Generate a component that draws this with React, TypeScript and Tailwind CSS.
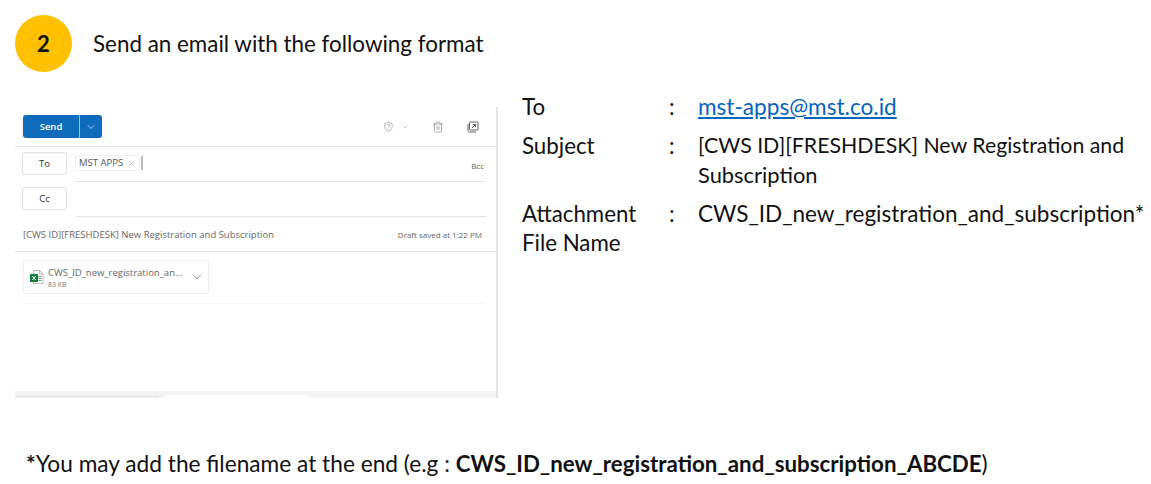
import { ChevronDown, ShieldQuestion, Trash2, X } from 'lucide-react';

const details = [
  { label: ['To'], value: [{ text: 'mst-apps@mst.co.id', size: 'text-[22.6px]' }], link: true },
  {
    label: ['Subject'],
    value: [
      { text: '[CWS ID][FRESHDESK] New Registration and', size: 'text-[21.3px]' },
      { text: 'Subscription', size: 'text-[21.9px]' },
    ],
  },
  {
    label: ['Attachment', 'File Name'],
    value: [{ text: 'CWS_ID_new_registration_and_subscription*', size: 'text-[22.5px]' }],
  },
];

function PopoutIcon() {
  return (
    <svg width="12" height="12" viewBox="0 0 12 12" fill="none" stroke="#616161" strokeWidth="1">
      <rect x="2.5" y="1" width="8.5" height="8" rx="1" />
      <path d="M1 3v6.5A1.5 1.5 0 0 0 2.500 11H9" />
      <path d="M5 7l3.500-3.500M6 3.500h2.500V6" />
    </svg>
  );
}

function ExcelIcon() {
  return (
    <svg width="14" height="14" viewBox="0 0 14 14">
      <path d="M3.500 .5h6l3.500 3.500v9.500h-9.500z" fill="#fff" stroke="#a8a8a8" strokeWidth=".8" />
      <path d="M9.500 .5v3.500h3.500" fill="none" stroke="#a8a8a8" strokeWidth=".8" />
      <path d="M8.500 6.500h3M8.500 8.500h3M8.500 10.500h3" stroke="#5ba67a" strokeWidth="1" />
      <rect x="0" y="4" width="8" height="8" rx=".6" fill="#107c41" />
      <path d="M2.300 6l3.400 4M5.700 6l-3.400 4" stroke="#fff" strokeWidth="1" />
    </svg>
  );
}

function FieldButton({ label }: { label: string }) {
  return (
    <div className="w-[45px] h-[23px] shrink-0 flex items-center justify-center pt-[1px] rounded-[3px] border border-[#e0e0e0] text-[9.500px] text-[#333]">
      {label}
    </div>
  );
}

function EmailDraft() {
  return (
    <div className="w-[483px] h-[291px] shrink-0 flex flex-col border-r-2 border-[#e4e4e4] font-['Open_Sans',sans-serif]">
      <div className="h-[40px] shrink-0 flex items-start justify-between pt-[8px] pl-[8px] pr-[17px] border-b border-[#e6e6e6]">
        <div className="flex h-[23px] w-[79px] rounded-[3px] bg-[#0f6cbd] text-white">
          <div className="w-[57px] flex items-center justify-center pt-[1px] text-[9.500px] font-semibold border-r border-[#9cc3e6]">Send</div>
          <div className="flex-1 flex items-center justify-center">
            <ChevronDown size={12} strokeWidth={1.2} />
          </div>
        </div>
        <div className="flex items-center h-[23px] text-[#757575]">
          <ShieldQuestion size={11} strokeWidth={1.2} />
          <ChevronDown size={8} strokeWidth={1.2} className="ml-[7px]" />
          <Trash2 size={12} strokeWidth={1.2} className="ml-[23px]" />
          <div className="ml-[23px]">
            <PopoutIcon />
          </div>
        </div>
      </div>
      <div className="h-[35px] shrink-0 flex items-start pt-[5px] pl-[7px] pr-[10px]">
        <FieldButton label="To" />
        <div className="ml-[8px] flex-1 h-[35px] -mt-[5px] pt-[8px] flex items-start justify-between border-b border-[#e4e4e4]">
          <div className="flex items-center h-[16px]">
            <div className="flex items-center h-[16px] px-[3px] rounded-[2px] border border-[#f0f0f0] text-[9.500px] text-[#555]">
              MST APPS
              <X size={9} strokeWidth={1.2} className="ml-[4px] text-[#777]" />
            </div>
            <div className="w-[2px] h-[14px] ml-[1px] bg-[#bdbdbd]" />
          </div>
          <span className="text-[8px] text-[#666] mt-[5px] mr-[2px]">Bcc</span>
        </div>
      </div>
      <div className="h-[35px] shrink-0 flex items-start pt-[5px] pl-[7px] pr-[10px]">
        <FieldButton label="Cc" />
        <div className="ml-[8px] flex-1 h-[35px] -mt-[5px] border-b border-[#e4e4e4]" />
      </div>
      <div className="h-[35px] shrink-0 flex items-center justify-between pl-[8px] pr-[14px] pt-[2px] border-b border-[#e6e6e6] text-[#666]">
        <span className="text-[9.500px]">[CWS ID][FRESHDESK] New Registration and Subscription</span>
        <span className="text-[8px]">Draft saved at 1:22 PM</span>
      </div>
      <div className="flex-1 px-[8px] pt-[8px]">
        <div className="pb-[9px] mr-[2px] border-b border-[#f5f5f5]">
          <div className="w-[186px] h-[34px] flex items-center pl-[6px] rounded-[2px] border border-[#eeeeee]">
            <ExcelIcon />
            <div className="ml-[4px] w-[137px] flex flex-col">
              <span className="text-[9.500px] leading-[13px] text-[#666] whitespace-nowrap">CWS_ID_new_registration_an...</span>
              <span className="text-[7px] leading-[9px] text-[#777] mt-[1px]">83 KB</span>
            </div>
            <ChevronDown size={14} strokeWidth={1.2} className="ml-[5px] text-[#616161]" />
          </div>
        </div>
      </div>
      <div className="h-[7px] shrink-0 bg-[#f3f3f3] flex items-end">
        <div className="w-[144px] h-[3px] bg-[#ebebeb]" />
        <div className="w-[143px] h-[3px] ml-[6px] bg-white" />
      </div>
    </div>
  );
}

export default function App() {
  return (
    <div className="w-[1151px] h-[484px] bg-white text-[#111] font-['Lato',sans-serif] overflow-hidden">
      <div className="flex items-center pt-[15px] pl-[15px]">
        <div className="w-[57px] h-[57px] rounded-full bg-[#ffc000] flex items-center justify-center text-[22px] font-bold">2</div>
        <span className="ml-[21px] text-[22.400px]">Send an email with the following format</span>
      </div>
      <div className="flex mt-[35px] pl-[15px]">
        <EmailDraft />
        <div className="ml-[24px] -mt-[15px] flex flex-col gap-[10px] text-[22.300px] leading-[29px]">
          {details.map((row) => (
            <div key={row.label[0]} className="flex">
              <div className="w-[147px] shrink-0">
                {row.label.map((line) => (
                  <div key={line}>{line}</div>
                ))}
              </div>
              <div className="w-[29px] shrink-0">:</div>
              <div className="whitespace-nowrap">
                {row.value.map((line) => (
                  <div key={line.text} className={`${line.size} ${row.link ? 'text-[#0563c1] underline' : ''}`}>
                    {line.text}
                  </div>
                ))}
              </div>
            </div>
          ))}
        </div>
      </div>
      <p className="mt-[51px] pl-[26px] text-[22.700px] leading-[29px] whitespace-nowrap">
        <b>*</b>You may add the filename at the end (e.g : <b className="text-[22.300px]">CWS_ID_new_registration_and_subscription_ABCDE</b>)
      </p>
    </div>
  );
}
